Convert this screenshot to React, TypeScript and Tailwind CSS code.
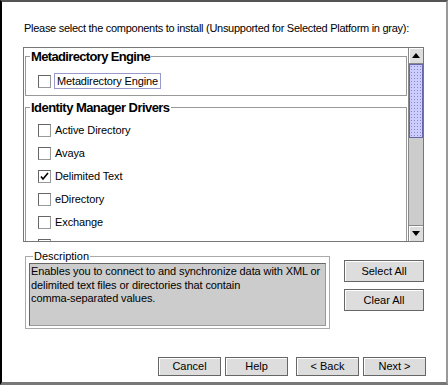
import { useState } from "react"

const DRIVERS = ["Active Directory", "Avaya", "Delimited Text", "eDirectory", "Exchange", "GroupWise"]

function CheckBox({ checked }: { checked?: boolean }) {
  return (
    <span className="flex h-[13px] w-[13px] shrink-0 items-center justify-center border border-[#666] border-r-[#999] border-b-[#999] bg-white shadow-[inset_1px_1px_0_#fff]">
      {checked && (
        <svg width="9" height="9" viewBox="0 0 9 9">
          <path d="M1 4.5 L3 7 L8 1" stroke="#000" strokeWidth="1.6" fill="none" />
        </svg>
      )}
    </span>
  )
}

function Btn({ label, className }: { label: string; className?: string }) {
  return (
    <button
      className={`flex items-center justify-center border border-[#666] bg-[#dddddd] text-[11px] text-black shadow-[inset_1px_1px_0_#fff] ${className ?? ""}`}
    >
      {label}
    </button>
  )
}

export default function App() {
  const [checked] = useState<Record<string, boolean>>({ "Delimited Text": true })

  return (
    <div className="h-[385px] w-[448px] overflow-hidden border-t-2 border-l-2 border-r-2 border-b-[3px] border-t-[#555] border-l-black border-r-[#999] border-b-[#777] bg-white font-['Liberation_Sans',sans-serif] text-black">
      <p className="ml-[22px] mt-[20px] whitespace-nowrap text-[11px] leading-[13px] tracking-[-0.28px]">
        Please select the components to install (Unsupported for Selected Platform in gray):
      </p>

      {/* component list */}
      <div className="ml-[21px] mt-[12px] flex h-[195px] w-[401px] border border-[#777]">
        <div className="h-full flex-1 overflow-hidden pl-[1px] pr-[1px]">
          <fieldset className="mt-[1px] h-[47px] border border-[#999] px-0">
            <legend className="ml-[4px] px-[1px] text-[13px] font-bold leading-[15px] tracking-[-0.65px]">
              Metadirectory Engine
            </legend>
            <div className="ml-[12px] mt-[9px] flex items-center gap-[3px]">
              <CheckBox />
              <span className="border border-[#9999cc] px-[2px] text-[11px] leading-[14px] tracking-[-0.15px]">
                Metadirectory Engine
              </span>
            </div>
          </fieldset>

          <fieldset className="mt-[4px] border border-[#999] px-0 pb-[10px]">
            <legend className="ml-[4px] px-[1px] text-[13px] font-bold leading-[15px] tracking-[-0.55px]">
              Identity Manager Drivers
            </legend>
            <div className="ml-[12px] mt-[9px] flex flex-col gap-[10px]">
              {DRIVERS.map((d) => (
                <div key={d} className="flex h-[13px] items-center gap-[4px]">
                  <CheckBox checked={checked[d]} />
                  <span className="whitespace-nowrap text-[11px] leading-[13px] tracking-[-0.1px]">{d}</span>
                </div>
              ))}
            </div>
          </fieldset>
        </div>

        {/* scrollbar */}
        <div className="flex h-full w-[15px] flex-col border-l border-[#888] bg-[#cccccc]">
          <div className="flex h-[16px] items-center justify-center border-b border-[#888] bg-[#dddddd] shadow-[inset_1px_1px_0_#fff]">
            <svg width="8" height="5" viewBox="0 0 8 5">
              <path d="M0 5 L4 0 L8 5 Z" fill="#000" />
            </svg>
          </div>
          <div className="h-[74px] border border-[#6666aa] bg-[#ccccff] bg-[image:radial-gradient(#8888bb_0.7px,transparent_0.9px)] bg-[length:3px_3px]" />
          <div className="flex-1" />
          <div className="flex h-[16px] items-center justify-center border-t border-[#888] bg-[#dddddd] shadow-[inset_1px_1px_0_#fff]">
            <svg width="8" height="5" viewBox="0 0 8 5">
              <path d="M0 0 L8 0 L4 5 Z" fill="#000" />
            </svg>
          </div>
        </div>
      </div>

      {/* description + select buttons */}
      <div className="mt-[8px] flex">
        <fieldset className="ml-[23px] h-[79px] w-[305px] border border-[#aaa] px-[3px]">
          <legend className="ml-[4px] px-[1px] text-[11px] leading-[13px]">Description</legend>
          <div className="h-[63px] whitespace-nowrap border border-[#666] border-r-[#999] border-b-[#999] bg-[#cccccc] px-[1px] pt-[1px] text-[11px] leading-[13.5px] tracking-[-0.1px]">
            Enables you to connect to and synchronize data with XML or
            <br />
            delimited text files or directories that contain
            <br />
            comma-separated values.
          </div>
        </fieldset>

        <div className="ml-[14px] mt-[10px] flex flex-col gap-[7px]">
          <Btn label="Select All" className="h-[22px] w-[80px]" />
          <Btn label="Clear All" className="h-[22px] w-[80px]" />
        </div>
      </div>

      {/* wizard buttons */}
      <div className="ml-[156px] mt-[28px] flex">
        <Btn label="Cancel" className="h-[19px] w-[63px]" />
        <Btn label="Help" className="ml-[4px] h-[19px] w-[63px]" />
        <Btn label="< Back" className="ml-[8px] h-[19px] w-[63px]" />
        <Btn label="Next >" className="ml-[4px] h-[19px] w-[63px]" />
      </div>
    </div>
  )
}
